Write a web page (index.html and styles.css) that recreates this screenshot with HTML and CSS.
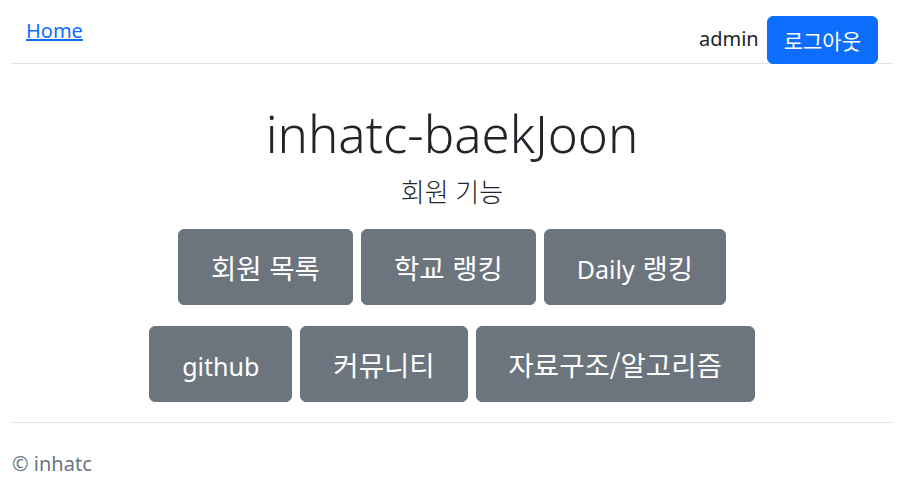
FILE: index.html
```html
<!DOCTYPE html>
<html lang="ko">
<head>
<meta charset="utf-8">
<title>inhatc-baekJoon</title>
<link rel="stylesheet" href="styles.css">
</head>
<body>
<div class="page">
  <header class="topbar">
    <a class="home-link" href="#">Home</a>
    <div class="user">
      <span class="user-name">admin</span>
      <a class="btn-logout" href="#">로그아웃</a>
    </div>
  </header>
  <main class="hero">
    <h1 class="title">inhatc-baekJoon</h1>
    <p class="subtitle">회원 기능</p>
    <div class="btn-row">
      <a class="btn-menu" href="#">회원 목록</a>
      <a class="btn-menu" href="#">학교 랭킹</a>
      <a class="btn-menu" href="#"><span class="latin">Daily</span> 랭킹</a>
    </div>
    <div class="btn-row">
      <a class="btn-menu" href="#"><span class="latin">github</span></a>
      <a class="btn-menu" href="#">커뮤니티</a>
      <a class="btn-menu" href="#">자료구조/알고리즘</a>
    </div>
  </main>
  <footer class="footer">© inhatc</footer>
</div>
</body>
</html>
```
FILE: styles.css
```css
html, body {
  margin: 0;
  padding: 0;
  background: #fff;
}
body {
  font-family: "Noto Sans", "Noto Sans CJK KR", sans-serif;
  color: #212529;
}
.page {
  margin-left: 11px;
  width: 882px;
}
.topbar {
  display: flex;
  justify-content: space-between;
  align-items: flex-start;
  padding-top: 16px;
  border-bottom: 1px solid #dee2e6;
  height: 47px;
}
.home-link {
  font-size: 20px;
  line-height: 30px;
  color: #0d6efd;
  padding-left: 15px;
}
.user {
  display: flex;
  align-items: center;
  gap: 8px;
  margin-right: 15px;
}
.user-name {
  font-size: 20px;
  line-height: 30px;
  margin-top: -3px;
}
.btn-logout {
  display: block;
  background: #0d6efd;
  color: #fff;
  text-decoration: none;
  font-family: "Noto Sans CJK KR", sans-serif;
  font-size: 21px;
  line-height: 30px;
  padding: 8px 16px;
  border: 1px solid #0d6efd;
  border-radius: 6px;
  height: 30px;
}
.hero {
  display: flex;
  flex-direction: column;
  align-items: center;
  padding-top: 39px;
}
.title {
  margin: 0;
  font-size: 51px;
  font-weight: 300;
  line-height: 60px;
}
.subtitle {
  margin: 11px 0 19px;
  font-size: 26px;
  font-weight: 300;
  line-height: 36px;
}
.btn-row {
  display: flex;
  justify-content: center;
  gap: 8px;
  margin-bottom: 21px;
}
.btn-row:last-child {
  margin-bottom: 20px;
}
.btn-menu {
  display: block;
  background: #6c757d;
  border: 1px solid #6c757d;
  color: #fff;
  text-decoration: none;
  font-family: "Noto Sans CJK KR", sans-serif;
  font-size: 27.5px;
  line-height: 42px;
  padding: 16px 32px;
  border-radius: 6px;
  height: 42px;
}
.latin {
  font-family: "Noto Sans", sans-serif;
  font-size: 25px;
}
.footer {
  border-top: 1px solid #dee2e6;
  padding-top: 26px;
  padding-left: 1px;
  font-size: 20px;
  line-height: 30px;
  color: #6c757d;
}
```
